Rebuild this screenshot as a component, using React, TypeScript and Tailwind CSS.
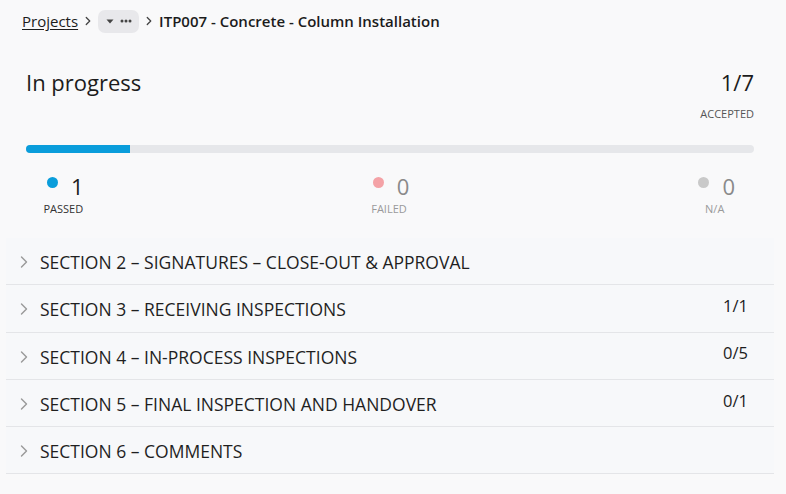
import { ChevronRight } from "lucide-react";

const sections = [
  { title: "SECTION 2 – SIGNATURES – CLOSE-OUT & APPROVAL", count: "" },
  { title: "SECTION 3 – RECEIVING INSPECTIONS", count: "1/1" },
  { title: "SECTION 4 – IN-PROCESS INSPECTIONS", count: "0/5" },
  { title: "SECTION 5 – FINAL INSPECTION AND HANDOVER", count: "0/1" },
  { title: "SECTION 6 – COMMENTS", count: "" },
];

const stats = [
  { label: "PASSED", value: 1, dot: "bg-[#0a9ddb]", num: "text-[#1c1c1c]", text: "text-[#333]" },
  { label: "FAILED", value: 0, dot: "bg-[#f4a2a6]", num: "text-[#8a8a8a]", text: "text-[#9a9a9a]" },
  { label: "N/A", value: 0, dot: "bg-[#c9c9c9]", num: "text-[#8a8a8a]", text: "text-[#9a9a9a]" },
];

export default function App() {
  return (
    <div className="h-[494px] w-[786px] overflow-hidden bg-[#f9f9fa] font-['Open_Sans',sans-serif] text-[#1c1c1c]">
      {/* breadcrumb */}
      <div className="flex h-[42px] items-center pl-[22px] text-[15px]">
        <span className="underline underline-offset-2">Projects</span>
        <ChevronRight className="mx-[3px] h-[14px] w-[14px] text-[#444]" strokeWidth={2.2} />
        <span className="flex h-[23px] w-[41px] items-center justify-center gap-[6px] rounded-[7px] bg-[#e8e8eb] text-[#444]">
          <svg width="8" height="5" viewBox="0 0 8 5">
            <path d="M0.5 0.5h7L4 4.5z" fill="#444" />
          </svg>
          <svg width="12" height="4" viewBox="0 0 12 4">
            <circle cx="2" cy="2" r="1.5" fill="#444" />
            <circle cx="6" cy="2" r="1.5" fill="#444" />
            <circle cx="10" cy="2" r="1.5" fill="#444" />
          </svg>
        </span>
        <ChevronRight className="mx-[3px] h-[14px] w-[14px] text-[#444]" strokeWidth={2.2} />
        <span className="font-semibold">ITP007 - Concrete - Column Installation</span>
      </div>

      {/* summary */}
      <div className="pl-[26px] pr-[32px] pt-[25px]">
        <div className="flex items-start justify-between">
          <span className="text-[22px] leading-[30px]">In progress</span>
          <div className="flex flex-col items-end">
            <span className="text-[22px] leading-[30px]">1/7</span>
            <span className="mt-[10px] text-[11px] leading-[14px] text-[#555]">ACCEPTED</span>
          </div>
        </div>
        <div className="mt-[24px] h-[8px] w-full overflow-hidden rounded-full bg-[#e6e7ea]">
          <div className="h-full bg-[#0a9ddb]" style={{ width: `${(1 / 7) * 100}%` }} />
        </div>
        <div className="mt-[22px] flex justify-between pl-[17px] pr-[19px]">
          {stats.map((s) => (
            <div key={s.label} className="flex flex-col items-center">
              <div className="flex items-start gap-[13px] pl-[4px]">
                <span className={`mt-[2px] h-[11px] w-[11px] rounded-full ${s.dot}`} />
                <span className={`text-[22px] leading-[22px] ${s.num}`}>{s.value}</span>
              </div>
              <span className={`mt-[5px] text-[11px] leading-[14px] ${s.text}`}>{s.label}</span>
            </div>
          ))}
        </div>
      </div>

      {/* sections */}
      <div className="ml-[6px] mr-[12px] mt-[22px] bg-[#f7f8fa]">
        {sections.map((s) => (
          <div key={s.title} className="flex h-[47.3px] items-center border-b border-[#e4e5e8] pl-[8px] pr-[26px] pt-[2px]">
            <ChevronRight className="h-[20px] w-[20px] text-[#9a9a9a]" strokeWidth={1.7} />
            <span className="ml-[6px] flex-1 text-[17.5px] text-[#1f1f1f]">{s.title}</span>
            <span className="-mt-[6px] text-[16.5px]">{s.count}</span>
          </div>
        ))}
      </div>
    </div>
  );
}
